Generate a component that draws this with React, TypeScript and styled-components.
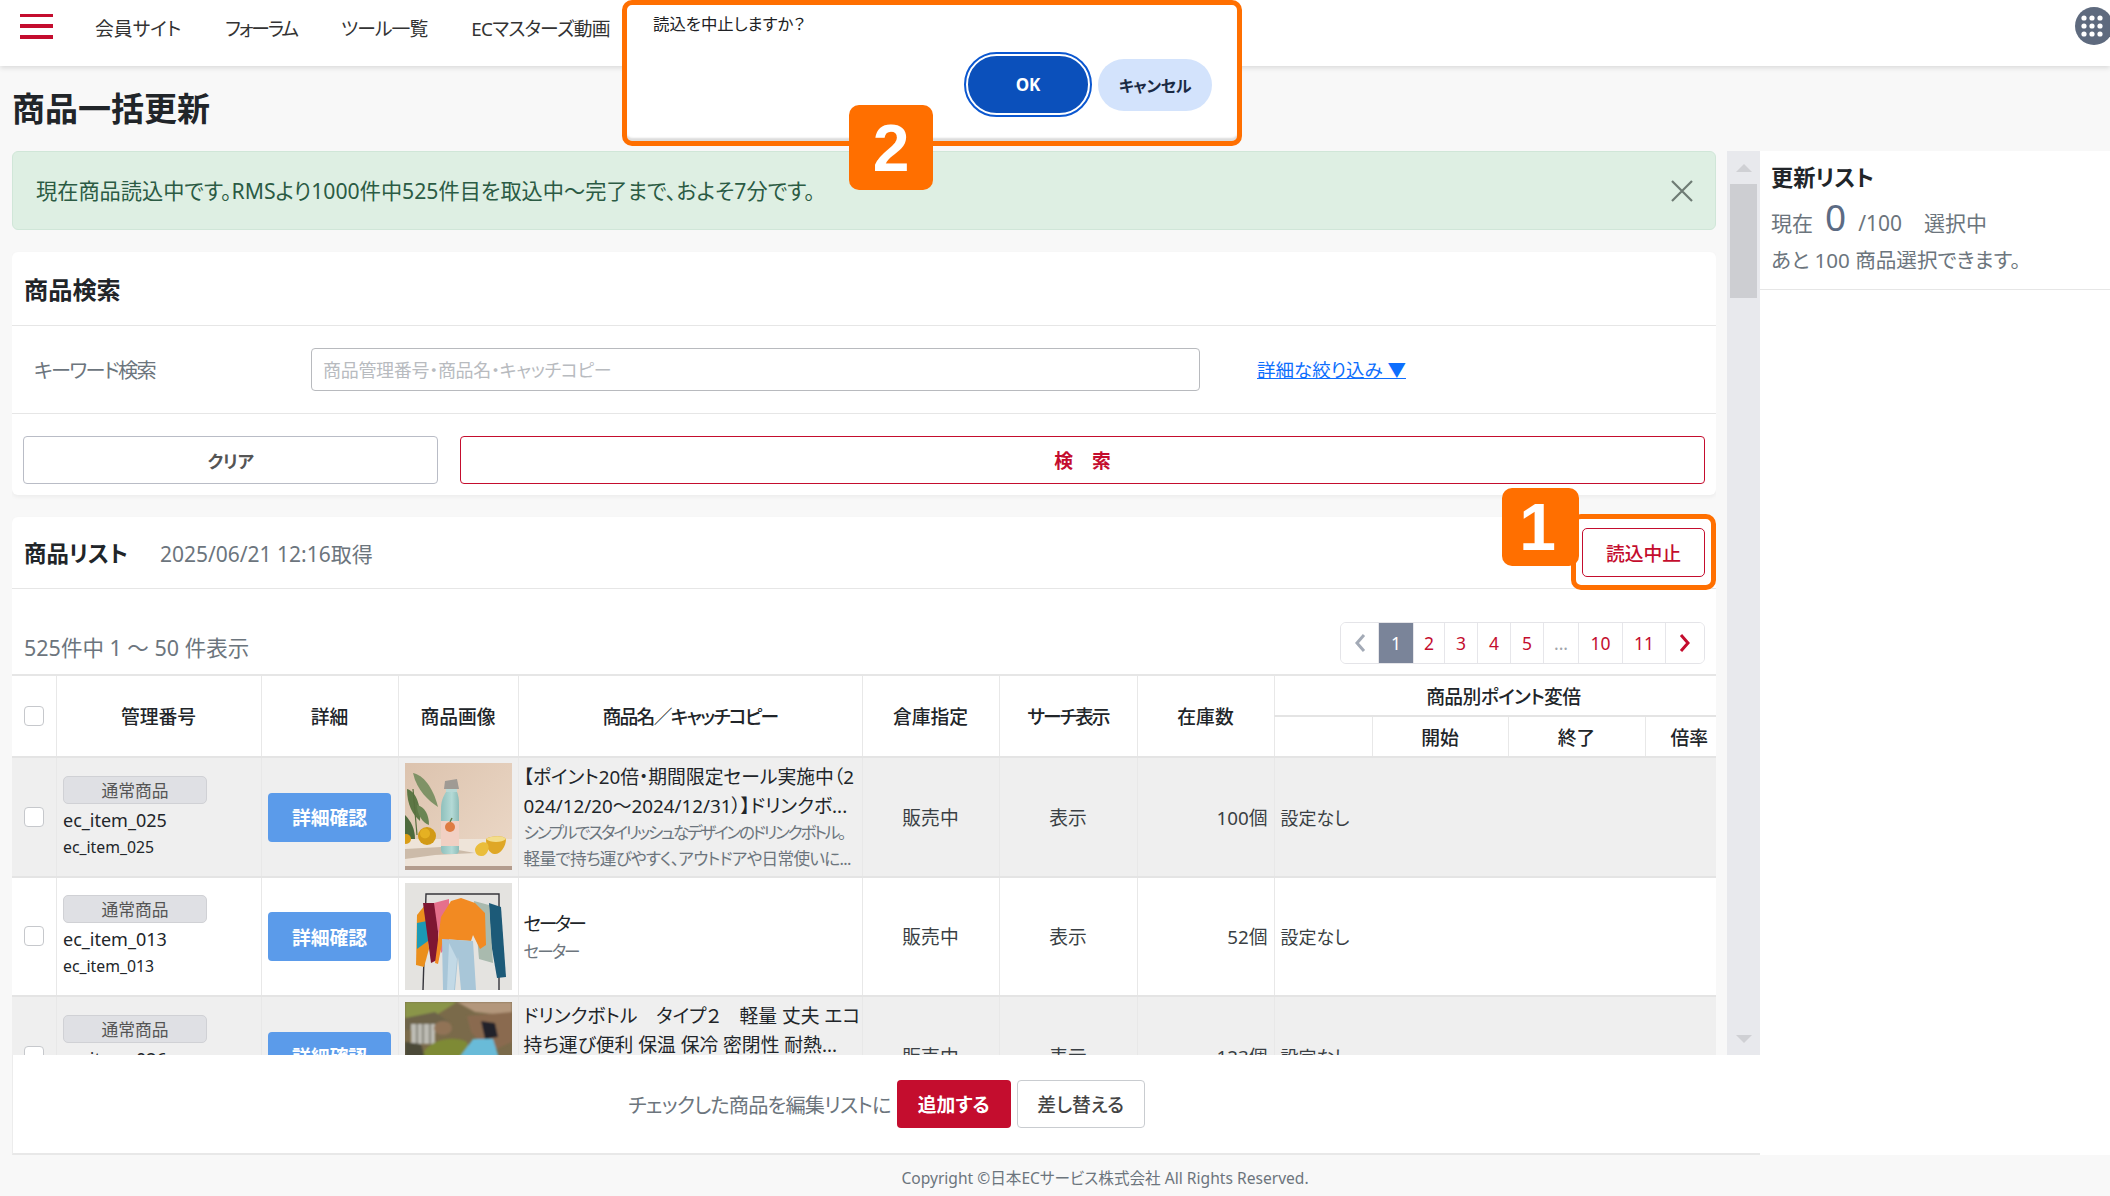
import React from "react";
import styled, { createGlobalStyle } from "styled-components";

const Global = createGlobalStyle`
  html, body { margin: 0; padding: 0; background: #f8f8f8; overflow: hidden; }
  body { font-family: "Noto Sans", "Noto Sans CJK JP", sans-serif; font-feature-settings: "palt"; color: #212529; }
  * { box-sizing: border-box; }
`;

const Page = styled.div`
  position: relative;
  width: 2110px;
  height: 1196px;
  overflow: hidden;
`;

const Header = styled.header`
  height: 66px;
  background: #fff;
  box-shadow: 0 2px 5px rgba(0, 0, 0, 0.12);
  display: flex;
  align-items: center;
  padding: 0 0 14px 20px;
`;
const Burger = styled.div`
  width: 33px;
  height: 25px;
  display: flex;
  flex-direction: column;
  justify-content: space-between;
  span { display: block; height: 3.5px; background: #c40d2e; }
`;
const Nav = styled.nav`
  display: flex;
  gap: 44px;
  margin: 4px 0 0 42px;
  font-size: 18.8px;
  color: #333;
`;
const NavItem = styled.span<{ $ls: number }>`
  letter-spacing: ${(p) => p.$ls}px;
`;
const GridIcon = styled.div`
  margin-left: auto;
  margin-right: -3px;
  width: 38px;
  height: 38px;
  border-radius: 50%;
  background: #5e6a7e;
  display: flex;
  align-items: center;
  justify-content: center;
`;

const PageTitle = styled.h1`
  margin: 0;
  height: 85px;
  padding: 0 0 3px 12px;
  display: flex;
  align-items: center;
  font-size: 33px;
  font-weight: 700;
  color: #212529;
`;

const Main = styled.div`
  display: grid;
  grid-template-columns: 1748px 350px;
  padding-left: 12px;
  height: 1004px;
`;
const LeftCol = styled.div`
  display: flex;
  flex-direction: column;
  min-width: 0;
`;
const ScrollRow = styled.div`
  height: 904px;
  display: flex;
  gap: 11px;
`;
const ScrollContent = styled.div`
  width: 1704px;
  height: 904px;
  overflow: hidden;
  display: flex;
  flex-direction: column;
  gap: 22px;
`;
const Scrollbar = styled.div`
  width: 33px;
  background: #e8e9ed;
  display: flex;
  flex-direction: column;
  align-items: center;
`;
const ScrollArrow = styled.div<{ $down?: boolean }>`
  height: 33px;
  width: 100%;
  display: flex;
  align-items: center;
  justify-content: center;
  flex: none;
  margin-top: ${(p) => (p.$down ? "auto" : "0")};
  &::before {
    content: "";
    border-left: 8px solid transparent;
    border-right: 8px solid transparent;
    ${(p) => (p.$down ? "border-top: 8px solid #cfd0d4;" : "border-bottom: 8px solid #cfd0d4;")}
  }
`;
const ScrollThumb = styled.div`
  width: 27px;
  height: 114px;
  background: #cdced2;
  flex: none;
`;

const Alert = styled.div`
  flex: none;
  height: 79px;
  background: #deefe3;
  border: 1px solid #d0e6d8;
  border-radius: 6px;
  display: flex;
  align-items: center;
  justify-content: space-between;
  padding: 0 22px 0 23px;
  font-size: 21.2px;
  color: #2b5b44;
`;
const AlertText = styled.span`
  margin-bottom: 2px;
`;
const CloseBtn = styled.div`
  width: 22px;
  height: 22px;
  display: flex;
  color: #6e7b74;
`;

const Card = styled.section`
  flex: none;
  background: #fff;
  border-radius: 6px;
  box-shadow: 0 2px 4px rgba(0, 0, 0, 0.05);
`;
const CardHead = styled.div<{ $h: number }>`
  height: ${(p) => p.$h}px;
  padding: 0 11px 0 12px;
  display: flex;
  align-items: center;
  border-bottom: 1.5px solid #e6e6e6;
`;
const CardTitle = styled.h2<{ $size: number }>`
  margin: 0;
  font-size: ${(p) => p.$size}px;
  font-weight: 700;
  color: #212529;
`;
const SearchRow = styled.div`
  height: 88px;
  display: flex;
  align-items: center;
  padding-left: 22px;
  border-bottom: 1.5px solid #e6e6e6;
`;
const SearchLabel = styled.div`
  width: 277px;
  font-size: 20.2px;
  letter-spacing: -1.7px;
  color: #6c757d;
`;
const SearchInput = styled.input`
  width: 889px;
  height: 43px;
  border: 1.5px solid #b8babe;
  border-radius: 4px;
  padding: 0 11px;
  font: inherit;
  font-size: 18px;
  letter-spacing: -0.3px;
  background: #fff;
  &::placeholder { color: #b8bbbf; opacity: 1; }
`;
const DetailLink = styled.a`
  margin: 0 0 1px 57px;
  font-size: 18.5px;
  color: #0d6efd;
  text-decoration: underline;
`;
const ButtonRow = styled.div`
  height: 81px;
  padding: 22px 11px 11px 11px;
  display: flex;
  gap: 22px;
`;
const ClearButton = styled.button`
  width: 415px;
  height: 48px;
  background: #fff;
  border: 1.5px solid #b9bcc6;
  border-radius: 4px;
  font: inherit;
  font-size: 17.5px;
  font-weight: 700;
  letter-spacing: -0.4px;
  color: #555;
`;
const SearchButton = styled.button`
  flex: 1;
  height: 48px;
  background: #fff;
  border: 1.5px solid #c40d2e;
  border-radius: 4px;
  font: inherit;
  font-size: 18.8px;
  font-weight: 700;
  color: #c40d2e;
`;
const ListDate = styled.span`
  margin-left: 32px;
  font-size: 21px;
  color: #6c757d;
`;
const StopButton = styled.button`
  margin-left: auto;
  width: 123px;
  height: 49px;
  background: #fff;
  border: 1.5px solid #c40d2e;
  border-radius: 5px;
  font: inherit;
  font-size: 18.8px;
  font-weight: 500;
  color: #c40d2e;
`;
const Toolbar = styled.div`
  height: 85px;
  padding: 33px 11px 0 12px;
  display: flex;
  justify-content: space-between;
`;
const CountText = styled.div`
  font-size: 21.5px;
  color: #6c757d;
  line-height: 52px;
`;
const Pager = styled.div`
  height: 42px;
  display: flex;
  border: 1.5px solid #e4e4e8;
  border-radius: 6px;
  overflow: hidden;
`;
const PageCell = styled.div<{ $w: number; $active?: boolean; $muted?: boolean }>`
  width: ${(p) => p.$w}px;
  display: flex;
  align-items: center;
  justify-content: center;
  font-size: 17.5px;
  color: ${(p) => (p.$active ? "#fff" : p.$muted ? "#a0a4aa" : "#c40d2e")};
  background: ${(p) => (p.$active ? "#7a8499" : "#fff")};
  & + & { border-left: 1px solid #e6e6ea; }
`;

const Table = styled.table`
  width: 1704px;
  table-layout: fixed;
  border-collapse: collapse;
  font-size: 18.8px;
`;
const Th = styled.th<{ $right?: boolean; $ls?: number; $pl?: number }>`
  border: 1px solid #e8e8e8;
  border-top: 2px solid #e6e6e6;
  border-bottom: 2px solid #e4e4e4;
  font-weight: 500;
  font-size: 18.8px;
  letter-spacing: ${(p) => p.$ls ?? 0}px;
  color: #212529;
  height: 41px;
  padding: 0 ${(p) => (p.$right ? "8px" : "0")} 0 ${(p) => p.$pl ?? 0}px;
  text-align: ${(p) => (p.$right ? "right" : "center")};
  &:first-child { border-left: none; }
  &:last-child { border-right: none; }
`;
const Tr = styled.tr<{ $shade?: boolean }>`
  height: 119.5px;
  background: ${(p) => (p.$shade ? "#efefef" : "#fff")};
`;
const Td = styled.td<{ $align?: string }>`
  border: 1px solid #e8e8e8;
  border-bottom: 2px solid #e4e4e4;
  padding: 0 6px;
  text-align: ${(p) => p.$align ?? "left"};
  vertical-align: middle;
  color: #3a3f44;
  &:first-child { border-left: none; }
  &:last-child { border-right: none; }
`;
const CheckCell = styled(Td)`
  padding: 0 0 0 12px;
`;
const CheckBox = styled.span`
  display: block;
  width: 20px;
  height: 20px;
  background: #fff;
  border: 1.5px solid #c6c8cc;
  border-radius: 4px;
`;
const HeadCheck = styled(CheckBox)`
  margin-left: 12px;
`;
const IdCell = styled(Td)`
  padding: 2px 6px 0 6.5px;
`;
const Tag = styled.div`
  width: 144px;
  height: 28px;
  background: #dfe0e4;
  border: 1px solid #d0d1d5;
  border-radius: 5px;
  font-size: 16.8px;
  color: #555;
  display: flex;
  align-items: center;
  justify-content: center;
`;
const ItemId = styled.div`
  margin-top: 3px;
  font-size: 18px;
  line-height: 27px;
  color: #212529;
`;
const ItemSub = styled.div`
  font-size: 15.8px;
  line-height: 26px;
  color: #212529;
`;
const DetailButton = styled.button`
  display: block;
  margin: 1px auto 0;
  width: 123px;
  height: 49px;
  background: #5b9bea;
  border: none;
  border-radius: 4px;
  font: inherit;
  font-size: 18.8px;
  font-weight: 700;
  color: #fff;
`;
const ThumbWrap = styled.div`
  width: 107px;
  height: 107px;
  margin: 0 auto;
  overflow: hidden;
  svg { display: block; }
`;
const ImgCell = styled(Td)`
  padding: 0;
`;
const NameCell = styled(Td)`
  padding: 2px 4px 0 5px;
`;
const NameLine = styled.div<{ $ls: number }>`
  font-size: 18.8px;
  line-height: 28.5px;
  letter-spacing: ${(p) => p.$ls}px;
  color: #212529;
  white-space: nowrap;
`;
const CopyLine = styled.div<{ $ls: number }>`
  font-size: 16.6px;
  line-height: 26px;
  letter-spacing: ${(p) => p.$ls}px;
  color: #6c757d;
  white-space: nowrap;
`;
const PointCell = styled(Td)`
  font-size: 18px;
`;

const ActionBar = styled.div`
  height: 100px;
  background: #fff;
  border-left: 1.5px solid #ececec;
  border-bottom: 2px solid #e8e8e8;
  display: flex;
  align-items: center;
  justify-content: center;
  gap: 6px;
`;
const ActionLabel = styled.span`
  font-size: 20.2px;
  letter-spacing: -0.8px;
  color: #6c757d;
`;
const AddButton = styled.button`
  width: 114px;
  height: 48px;
  background: #c40d2e;
  border: none;
  border-radius: 4px;
  font: inherit;
  font-size: 18.8px;
  font-weight: 700;
  color: #fff;
`;
const ReplaceButton = styled.button`
  width: 128px;
  height: 48px;
  background: #fff;
  border: 1.5px solid #c9ccd0;
  border-radius: 4px;
  font: inherit;
  font-size: 18.8px;
  font-weight: 500;
  color: #444;
`;

const SidePanel = styled.aside`
  background: #fff;
  height: 1004px;
`;
const SideHead = styled.div`
  height: 139px;
  padding: 12px 11px 0;
  border-bottom: 1.5px solid #e6e6e6;
`;
const SideTitle = styled.h2`
  margin: 0;
  font-size: 22.2px;
  line-height: 30px;
  font-weight: 700;
`;
const SideCount = styled.div`
  margin-top: -2px;
  height: 42px;
  display: flex;
  align-items: baseline;
  font-size: 21px;
  color: #6c757d;
`;
const SideCountState = styled.span`
  margin-left: 22px;
`;
const BigZero = styled.span`
  font-size: 37px;
  margin: 0 12px 0 12px;
  color: #5c6b84;
`;
const SideNote = styled.div`
  margin-top: 10px;
  font-size: 20.6px;
  line-height: 34px;
  color: #6c757d;
`;
const Copyright = styled.footer`
  height: 41px;
  padding: 4px 0 0 100px;
  display: flex;
  align-items: center;
  justify-content: center;
  font-size: 15.6px;
  color: #6c757d;
`;

const Frame = styled.div<{ $x: number; $y: number; $w: number; $h: number }>`
  position: absolute;
  left: ${(p) => p.$x}px;
  top: ${(p) => p.$y}px;
  width: ${(p) => p.$w}px;
  height: ${(p) => p.$h}px;
  border: 5px solid #ff6f00;
  border-radius: 10px;
`;
const Badge = styled.div<{ $x: number; $y: number; $w: number; $h: number; $nudge?: number }>`
  position: absolute;
  left: ${(p) => p.$x}px;
  top: ${(p) => p.$y}px;
  width: ${(p) => p.$w}px;
  height: ${(p) => p.$h}px;
  padding-right: ${(p) => p.$nudge ?? 0}px;
  background: #ff6f00;
  border-radius: 10px;
  color: #fff;
  font-family: "Liberation Sans", sans-serif;
  font-weight: 700;
  font-size: 66px;
  display: flex;
  align-items: center;
  justify-content: center;
`;
const Dialog = styled.div`
  position: absolute;
  left: 622px;
  top: 0;
  width: 620px;
  height: 146px;
  background: #fff;
  border: 5px solid #ff6f00;
  border-radius: 10px;
  box-shadow: inset 0 -4px 2px -1px #dcdcdc;
  padding: 9px 26px 0;
`;
const DialogText = styled.div`
  font-size: 16.4px;
  line-height: 20px;
  color: #202124;
`;
const DialogActions = styled.div`
  position: absolute;
  left: 339px;
  top: 49px;
  display: flex;
  align-items: center;
  gap: 8px;
`;
const OkButton = styled.button`
  width: 124px;
  height: 61px;
  background: #0b50bb;
  border: 2px solid #fff;
  outline: 2.5px solid #0b57d0;
  outline-offset: 0;
  border-radius: 32px;
  font: inherit;
  font-size: 17px;
  font-weight: 700;
  color: #fff;
`;
const CancelButton = styled.button`
  width: 114px;
  height: 52px;
  background: #d3e3fc;
  border: none;
  border-radius: 26px;
  font: inherit;
  font-size: 16px;
  font-weight: 700;
  letter-spacing: -0.3px;
  color: #1a2a44;
`;

const BottleArt = () => (
  <svg width="107" height="107" viewBox="0 0 107 107">
    <defs>
      <linearGradient id="wall" x1="0" y1="0" x2="1" y2="1">
        <stop offset="0" stopColor="#dcc3ae" />
        <stop offset="1" stopColor="#ecd9c8" />
      </linearGradient>
      <linearGradient id="flask" x1="0" y1="0" x2="1" y2="0">
        <stop offset="0" stopColor="#8fc0bc" />
        <stop offset="0.6" stopColor="#b4dad6" />
        <stop offset="1" stopColor="#8dbcb8" />
      </linearGradient>
      <filter id="soft">
        <feGaussianBlur stdDeviation="0.5" />
      </filter>
    </defs>
    <rect width="107" height="107" fill="url(#wall)" />
    <g filter="url(#soft)">
      <rect y="76" width="107" height="27" fill="#eee4d9" />
      <rect y="103" width="107" height="4" fill="#b39c8d" />
      <path d="M0 86 L36 84 L70 90 L30 92 L0 96Z" fill="#bda994" opacity="0.7" />
      <path d="M8 10 C18 12 28 24 33 44 C24 38 12 28 8 10Z" fill="#7f9266" />
      <path d="M2 26 C10 28 16 40 15 58 C8 52 2 42 2 26Z" fill="#5d7745" />
      <path d="M12 42 C20 44 24 52 24 62 C18 60 12 52 12 42Z" fill="#6b8552" />
      <path d="M8 26 L12 72" stroke="#59703f" strokeWidth="1.2" fill="none" />
      <path d="M0 52 C6 58 10 66 10 76 L0 76Z" fill="#4e6a3d" />
      <circle cx="22" cy="73" r="9" fill="#d29a14" />
      <circle cx="20" cy="70.5" r="5" fill="#eab728" opacity="0.8" />
      <circle cx="1" cy="76" r="5" fill="#d99d18" />
      <path d="M81 76 C85 73 98 72 101 76 C101 84 95 92 89 91 C84 90 81 84 81 76Z" fill="#dfa725" />
      <path d="M81 76 C85 73 98 72 101 76 C97 80 85 80 81 76Z" fill="#f3dd8a" />
      <path d="M70 86 C72 80 78 78 82 80 C86 84 82 94 76 93 C72 93 70 90 70 86Z" fill="#eabd3a" />
      <path d="M40 18 L52 16 L54 26 L39 26Z" fill="#9f9a94" />
      <rect x="41" y="26" width="11" height="4" fill="#b8d8d5" />
      <path d="M41 29 C38 34 36 38 36 46 L36 86 C36 90 38 91 40 91 L50 91 C53 91 54 90 54 86 L54 46 C54 38 54 34 52 29Z" fill="url(#flask)" />
      <path d="M36 58 L54 58 L54 83 L36 83Z" fill="#f1d0c3" />
      <circle cx="45" cy="64" r="5" fill="#de7b43" />
      <path d="M45 59 L47 55" stroke="#5f7a48" strokeWidth="1.4" />
    </g>
  </svg>
);

const SweaterArt = () => (
  <svg width="107" height="107" viewBox="0 0 107 107">
    <defs>
      <filter id="soft2">
        <feGaussianBlur stdDeviation="0.35" />
      </filter>
    </defs>
    <rect width="107" height="107" fill="#e4e3e0" />
    <g filter="url(#soft2)">
      <path d="M18 107 L21 11 H94 V107" fill="none" stroke="#34343a" strokeWidth="1.4" />
      <path d="M20 22 L12 32 L11 82 L19 84 L24 66Z" fill="#ea8f1f" />
      <path d="M12 40 L22 38 L23 58 L12 66Z" fill="#1e9ab5" />
      <path d="M18 20 L32 20 L34 76 L26 80 Z" fill="#7e1533" />
      <path d="M29 20 L44 16 L44 62 L36 70Z" fill="#e5708c" />
      <path d="M84 20 L96 24 L101 94 L92 95 L86 60Z" fill="#1f5a78" />
      <path d="M69 18 L84 22 L88 80 L74 76Z" fill="#a9baae" />
      <path d="M46 18 L56 15 L70 20 L80 30 L81 62 L75 66 L68 52 L66 58 L38 56 L33 81 L30 80 L36 34Z" fill="#f28a22" />
      <path d="M37 56 L68 58 L71 107 L56 107 L53 74 L50 107 L38 107Z" fill="#a8c6d8" />
      <path d="M44 60 L52 76 L49 107 L42 107Z" fill="#c2d9e6" />
    </g>
  </svg>
);

const NatureArt = () => (
  <svg width="107" height="107" viewBox="0 0 107 107">
    <defs>
      <filter id="soft3">
        <feGaussianBlur stdDeviation="1" />
      </filter>
    </defs>
    <rect width="107" height="107" fill="#7a6a4a" />
    <g filter="url(#soft3)">
      <path d="M0 0 H52 L30 14 L0 20Z" fill="#8a9548" />
      <path d="M52 0 H107 V14 L70 10Z" fill="#b3977c" />
      <path d="M0 16 L30 10 L44 20 L26 28 L0 28Z" fill="#6d6449" />
      <path d="M6 22 h24 v20 h-24z" fill="#bdbcb4" />
      <path d="M12 22 v20 M18 22 v20 M25 22 v20" stroke="#75726a" strokeWidth="1.5" />
      <ellipse cx="38" cy="26" rx="9" ry="7" fill="#917357" />
      <path d="M62 14 L107 10 V40 L84 50 L66 30Z" fill="#8a6a4f" />
      <path d="M20 48 C30 36 50 34 62 40 L66 56 L16 56Z" fill="#7e8a36" />
      <path d="M0 40 L16 42 L20 56 L0 56Z" fill="#4b4a38" />
      <path d="M54 56 L68 37 L88 37 L94 56Z" fill="#69bbd8" />
      <path d="M76 19 L90 21 L93 35 L80 37Z" fill="#24242a" />
    </g>
  </svg>
);

const Grid = () => (
  <svg width="22" height="22" viewBox="0 0 22 22" fill="#fff" style={{ marginLeft: -4 }}>
    {[3, 11, 19].flatMap((y) => [3, 11, 19].map((x) => <circle key={`${x}-${y}`} cx={x} cy={y} r="2.6" />))}
  </svg>
);

type Line = { text: string; ls: number };
type Row = {
  id: string;
  name: Line[];
  copy: Line[];
  stock: string;
  art: React.ReactNode;
};
const rows: Row[] = [
  {
    id: "ec_item_025",
    name: [
      { text: "【ポイント20倍・期間限定セール実施中（2", ls: 0 },
      { text: "024/12/20～2024/12/31）】ドリンクボ...", ls: 0 },
    ],
    copy: [
      { text: "シンプルでスタイリッシュなデザインのドリンクボトル。", ls: -2.2 },
      { text: "軽量で持ち運びやすく、アウトドアや日常使いに...", ls: -0.7 },
    ],
    stock: "100個",
    art: <BottleArt />,
  },
  {
    id: "ec_item_013",
    name: [{ text: "セーター", ls: -2.6 }],
    copy: [{ text: "セーター", ls: -2 }],
    stock: "52個",
    art: <SweaterArt />,
  },
  {
    id: "ec_item_026",
    name: [
      { text: "ドリンクボトル　タイプ２　軽量 丈夫 エコ", ls: 0 },
      { text: "持ち運び便利 保温 保冷 密閉性 耐熱...", ls: 0 },
    ],
    copy: [
      { text: "ドリンクボトル タイプ２", ls: -1 },
      { text: "軽量で丈夫なエコボトル", ls: -1 },
    ],
    stock: "123個",
    art: <NatureArt />,
  },
];

const pages: { t: React.ReactNode; w: number; active?: boolean; muted?: boolean }[] = [
  { t: "", w: 37 },
  { t: "1", w: 35, active: true },
  { t: "2", w: 31 },
  { t: "3", w: 33 },
  { t: "4", w: 33 },
  { t: "5", w: 33 },
  { t: "...", w: 35, muted: true },
  { t: "10", w: 44 },
  { t: "11", w: 43 },
  { t: "", w: 39 },
];

const Chevron = ({ d, color }: { d: string; color: string }) => (
  <svg width="12" height="20" viewBox="0 0 12 20" fill="none" stroke={color} strokeWidth="3">
    <path d={d} />
  </svg>
);

export default function App() {
  return (
    <Page>
      <Global />
      <Header>
        <Burger>
          <span />
          <span />
          <span />
        </Burger>
        <Nav>
          <NavItem $ls={0}>会員サイト</NavItem>
          <NavItem $ls={-2.1}>フォーラム</NavItem>
          <NavItem $ls={-0.9}>ツール一覧</NavItem>
          <NavItem $ls={-0.7}>ECマスターズ動画</NavItem>
        </Nav>
        <GridIcon>
          <Grid />
        </GridIcon>
      </Header>
      <PageTitle>商品一括更新</PageTitle>
      <Main>
        <LeftCol>
          <ScrollRow>
            <ScrollContent>
              <Alert>
                <AlertText>現在商品読込中です。RMSより1000件中525件目を取込中～完了まで、およそ7分です。</AlertText>
                <CloseBtn>
                  <svg width="22" height="22" viewBox="0 0 22 22" stroke="currentColor" strokeWidth="2.2">
                    <path d="M1 1 L21 21 M21 1 L1 21" />
                  </svg>
                </CloseBtn>
              </Alert>
              <Card>
                <CardHead $h={74}>
                  <CardTitle $size={24.2}>商品検索</CardTitle>
                </CardHead>
                <SearchRow>
                  <SearchLabel>キーワード検索</SearchLabel>
                  <SearchInput placeholder="商品管理番号・商品名・キャッチコピー" />
                  <DetailLink>詳細な絞り込み ▼</DetailLink>
                </SearchRow>
                <ButtonRow>
                  <ClearButton>クリア</ClearButton>
                  <SearchButton>検　索</SearchButton>
                </ButtonRow>
              </Card>
              <Card>
                <CardHead $h={72}>
                  <CardTitle $size={22.4}>商品リスト</CardTitle>
                  <ListDate>2025/06/21 12:16取得</ListDate>
                  <StopButton>読込中止</StopButton>
                </CardHead>
                <Toolbar>
                  <CountText>525件中 1 ～ 50 件表示</CountText>
                  <Pager>
                    {pages.map((p, i) => (
                      <PageCell key={i} $w={p.w} $active={p.active} $muted={p.muted}>
                        {i === 0 ? (
                          <Chevron d="M10 2 L3 10 L10 18" color="#a3aab6" />
                        ) : i === pages.length - 1 ? (
                          <Chevron d="M2 2 L9 10 L2 18" color="#c40d2e" />
                        ) : (
                          p.t
                        )}
                      </PageCell>
                    ))}
                  </Pager>
                </Toolbar>
                <Table>
                  <colgroup>
                    {[44, 205, 137, 120, 344, 137, 138, 137, 98, 136, 137, 71].map((w, i) => (
                      <col key={i} width={w} />
                    ))}
                  </colgroup>
                  <thead>
                    <tr>
                      <Th rowSpan={2}>
                        <HeadCheck />
                      </Th>
                      <Th rowSpan={2}>管理番号</Th>
                      <Th rowSpan={2}>詳細</Th>
                      <Th rowSpan={2}>商品画像</Th>
                      <Th rowSpan={2} $ls={-1.7}>
                        商品名／キャッチコピー
                      </Th>
                      <Th rowSpan={2}>倉庫指定</Th>
                      <Th rowSpan={2} $ls={-2}>
                        サーチ表示
                      </Th>
                      <Th rowSpan={2}>在庫数</Th>
                      <Th colSpan={4} $ls={-0.6} $pl={16}>
                        商品別ポイント変倍
                      </Th>
                    </tr>
                    <tr>
                      <Th />
                      <Th>開始</Th>
                      <Th>終了</Th>
                      <Th $right>倍率</Th>
                    </tr>
                  </thead>
                  <tbody>
                    {rows.map((r, i) => (
                      <Tr key={r.id} $shade={i % 2 === 0}>
                        <CheckCell>
                          <CheckBox />
                        </CheckCell>
                        <IdCell>
                          <Tag>通常商品</Tag>
                          <ItemId>{r.id}</ItemId>
                          <ItemSub>{r.id}</ItemSub>
                        </IdCell>
                        <Td>
                          <DetailButton>詳細確認</DetailButton>
                        </Td>
                        <ImgCell>
                          <ThumbWrap>{r.art}</ThumbWrap>
                        </ImgCell>
                        <NameCell>
                          {r.name.map((line) => (
                            <NameLine key={line.text} $ls={line.ls}>
                              {line.text}
                            </NameLine>
                          ))}
                          {r.copy.map((line) => (
                            <CopyLine key={line.text} $ls={line.ls}>
                              {line.text}
                            </CopyLine>
                          ))}
                        </NameCell>
                        <Td $align="center">販売中</Td>
                        <Td $align="center">表示</Td>
                        <Td $align="right">{r.stock}</Td>
                        <PointCell colSpan={4}>設定なし</PointCell>
                      </Tr>
                    ))}
                  </tbody>
                </Table>
              </Card>
            </ScrollContent>
            <Scrollbar>
              <ScrollArrow />
              <ScrollThumb />
              <ScrollArrow $down />
            </Scrollbar>
          </ScrollRow>
          <ActionBar>
            <ActionLabel>チェックした商品を編集リストに</ActionLabel>
            <AddButton>追加する</AddButton>
            <ReplaceButton>差し替える</ReplaceButton>
          </ActionBar>
        </LeftCol>
        <SidePanel>
          <SideHead>
            <SideTitle>更新リスト</SideTitle>
            <SideCount>
              現在<BigZero>0</BigZero>/100<SideCountState>選択中</SideCountState>
            </SideCount>
            <SideNote>あと 100 商品選択できます。</SideNote>
          </SideHead>
        </SidePanel>
      </Main>
      <Copyright>Copyright ©日本ECサービス株式会社 All Rights Reserved.</Copyright>

      <Frame $x={1571} $y={514} $w={145} $h={76} />
      <Badge $x={1502} $y={488} $w={77} $h={78} $nudge={6}>
        1
      </Badge>
      <Dialog>
        <DialogText>読込を中止しますか？</DialogText>
        <DialogActions>
          <OkButton>OK</OkButton>
          <CancelButton>キャンセル</CancelButton>
        </DialogActions>
      </Dialog>
      <Badge $x={849} $y={105} $w={84} $h={85}>
        2
      </Badge>
    </Page>
  );
}
